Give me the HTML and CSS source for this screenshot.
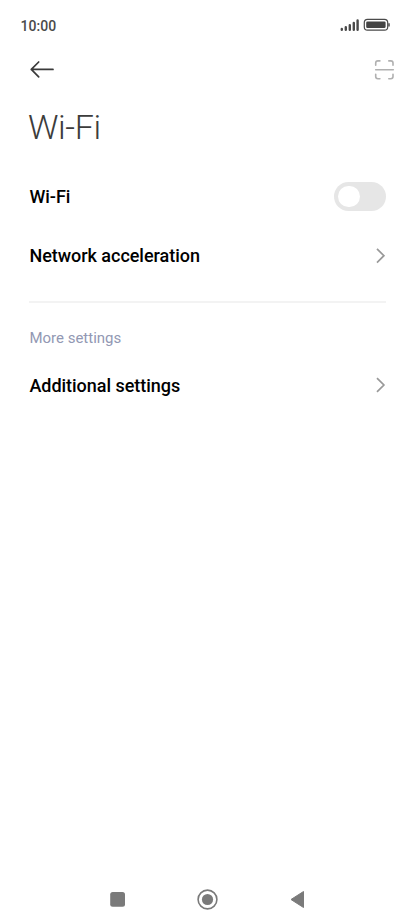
FILE: index.html
```html
<!DOCTYPE html>
<html lang="en">
<head>
<meta charset="utf-8">
<title>Wi-Fi</title>
<link rel="stylesheet" href="styles.css">
</head>
<body>
<div class="screen">
  <header class="status">
    <span class="clock">10:00</span>
    <svg class="status-icons" width="51" height="14" viewBox="340 18 51 14">
      <path d="M341.8 29v.7M345.8 27.2v2.5M349.8 25.2v4.5M353.8 22.9v6.8M357.6 20.4v9.3" stroke="#4a4a4a" stroke-width="2.4" stroke-linecap="round" fill="none"/>
      <rect x="364.3" y="19.4" width="23.4" height="10.8" rx="3.2" fill="none" stroke="#4a4a4a" stroke-width="1.2"/>
      <rect x="366.2" y="21.5" width="19.4" height="6.6" rx="1.3" fill="#444"/>
      <path d="M389 23.2v3.2" stroke="#555" stroke-width="1.6"/>
    </svg>
  </header>
  <nav class="toolbar">
    <svg width="26" height="20" viewBox="29 60 26 20" fill="none" stroke="#3a3a3a" stroke-width="1.7" stroke-linecap="round" stroke-linejoin="round"><path d="M53 69.4H31.3M38.7 62l-7.4 7.4 7.4 7.4"/></svg>
    <svg width="22" height="22" viewBox="373 59 22 22" fill="none" stroke="#b0b0b0" stroke-width="1.6" stroke-linecap="round"><path d="M375.7 65.3v-2.2q0-2.2 2.2-2.2h2M388.8 60.9h2q2.2 0 2.2 2.2v2.2M375.7 74.3v2.2q0 2.2 2.2 2.2h2M388.8 78.7h2q2.2 0 2.2-2.2v-2.2M375.7 69.8h17.6"/></svg>
  </nav>
  <h1 class="title">Wi-Fi</h1>
  <main class="settings">
    <div class="row wifi"><span>Wi-Fi</span><span class="switch"><span class="knob"></span></span></div>
    <div class="row network"><span>Network acceleration</span><svg class="chevron" width="12" height="18" viewBox="0 0 12 18"><path d="M3 1.8l6.9 6.9L3 15.6"/></svg></div>
    <hr class="divider">
    <h2 class="section">More settings</h2>
    <div class="row additional"><span>Additional settings</span><svg class="chevron" width="12" height="18" viewBox="0 0 12 18"><path d="M3 1.1L9.9 8 3 14.9"/></svg></div>
  </main>
  <footer class="navbar">
    <svg width="196" height="22" viewBox="109 888 196 22" fill="#7a7a7a"><rect x="110.2" y="892" width="14.8" height="14.8" rx="2.5"/><circle cx="207.5" cy="899.5" r="9.4" fill="none" stroke="#7a7a7a" stroke-width="1.6"/><circle cx="207.5" cy="899.5" r="5.6"/><path d="M291 899.5l12.5-8v16z" stroke="#7a7a7a" stroke-linejoin="round"/></svg>
  </footer>
</div>
</body>
</html>
```
FILE: styles.css
```css
* { box-sizing: border-box; }
body { margin: 0; background: #fff; font-family: Roboto, sans-serif; }
.screen { height: 924px; display: flex; flex-direction: column; }
svg { display: block; flex: none; }
.status { height: 50px; padding: 0 24px 0 20.6px; display: flex; align-items: center; justify-content: space-between; }
.clock { padding-top: 2px; font-size: 14px; font-weight: 500; color: #4a4a4a; }
.toolbar { height: 40px; padding: 0 20px 0 29px; display: flex; align-items: center; justify-content: space-between; }
.title { margin: 13px 0 0 28px; height: 50px; line-height: 49px; font-size: 34px; font-weight: 300; letter-spacing: -.4px; color: #3c3c3c; }
.settings { margin: 14px 29px 0; }
.row { height: 59px; display: flex; align-items: center; justify-content: space-between; font-size: 18px; font-weight: 500; color: #000; }
.row > span:first-child { padding-left: .4px; }
.switch { width: 52px; height: 29px; border-radius: 15px; background: #e6e6e6; padding: 3.7px 4px; }
.knob { display: block; width: 21.5px; height: 21.5px; border-radius: 50%; background: #fff; }
.chevron { fill: none; stroke: #999; stroke-width: 1.7; }
.divider { margin: 16px 0 0; border: 0; height: 2px; background: #f3f3f3; }
.section { margin: 24px 0 0; height: 22px; line-height: 22px; padding-left: .4px; font-size: 15px; font-weight: 400; color: #9298b3; }
.additional { margin-top: 7px; }
.additional > span, .network > span { letter-spacing: -.03px; }
.navbar { margin-top: auto; height: 50px; padding-top: 14px; padding-left: 109px; }
```
